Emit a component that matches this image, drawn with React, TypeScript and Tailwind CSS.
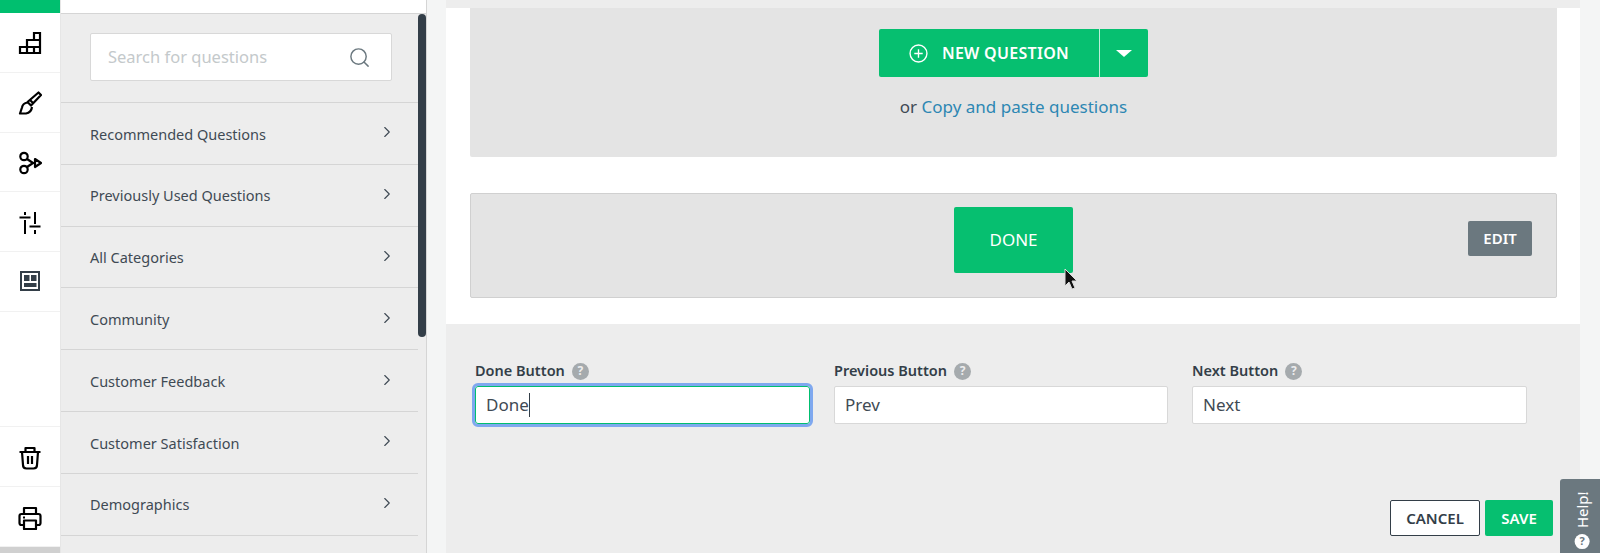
import { Search, ChevronRight } from 'lucide-react';

const font = "font-['Noto_Sans',sans-serif]";

const categories = [
  'Recommended Questions',
  'Previously Used Questions',
  'All Categories',
  'Community',
  'Customer Feedback',
  'Customer Satisfaction',
  'Demographics',
];

const IconStairs = () => (
  <svg width="24" height="24" viewBox="0 0 24 24" fill="none" stroke="#000" strokeWidth="2.200">
    <path d="M2 16h20v6H2zM9 16v6M16 16v6M9 16V9h13v7M16 9V2h6v7" />
  </svg>
);

const IconBrush = () => (
  <svg width="24" height="24" viewBox="0 0 24 24" fill="none" stroke="#000" strokeWidth="2.200" strokeLinejoin="round">
    <path d="M20.500 1.500 23 4 13 14.500 9.500 11zM9.500 11.500c-3 .5-5 2-5.500 5l-2 6h6c3-.5 5.500-2.500 6-6.500M12 9l3.500 3.500" />
  </svg>
);

const IconBranch = () => (
  <svg width="24" height="24" viewBox="0 0 24 24" fill="none" stroke="#000" strokeWidth="2.200" strokeLinejoin="round">
    <circle cx="6" cy="5.500" r="3.700" />
    <circle cx="6" cy="18.500" r="3.700" />
    <path d="M9 8l6 4-6 4M15 12h2M17 8l6 4-6 4z" />
  </svg>
);

const IconSliders = () => (
  <svg width="24" height="24" viewBox="0 0 24 24" fill="none" stroke="#000" strokeWidth="2">
    <path d="M7 1v3M1.500 6.500h11M7 9v14M17 1v12M11.500 15.500h11M17 19v4" />
  </svg>
);

const IconLayout = () => (
  <svg width="24" height="24" viewBox="0 0 24 24" fill="none">
    <rect x="3" y="3" width="18" height="18" stroke="#333e48" strokeWidth="2" />
    <rect x="6" y="6" width="5.500" height="6" fill="#333e48" />
    <rect x="13" y="6" width="5.500" height="6" fill="#333e48" />
    <rect x="6" y="14" width="12.500" height="4" fill="#333e48" />
  </svg>
);

const IconTrash = () => (
  <svg width="24" height="24" viewBox="0 0 24 24" fill="none" stroke="#000" strokeWidth="2.200" strokeLinejoin="round">
    <path d="M1.500 6h21M7.500 6V2h9v4M4 6l1 13c0 2 1.500 3.500 3.500 3.500h7c2 0 3.500-1.500 3.500-3.500l1-13M10 10v8M14 10v8" />
  </svg>
);

const IconPrint = () => (
  <svg width="24" height="24" viewBox="0 0 24 24" fill="none" stroke="#000" strokeWidth="2.200" strokeLinejoin="round">
    <path d="M6 8V2h12v6M6 19H3.500Q1.500 19 1.500 17V10Q1.500 8 3.500 8h17q2 0 2 2v7q0 2-2 2H18M6 14.500h12V23H6z" />
    <path d="M5 11.500h2" />
  </svg>
);

const HelpDot = () => (
  <span className="flex h-[17px] w-[17px] items-center justify-center rounded-full bg-[#a5aaad] text-[12px] font-bold leading-none text-[#ededed]">
    ?
  </span>
);

const RailItem = ({ children }: { children: React.ReactNode }) => (
  <div className="flex h-[59.800px] items-center justify-center border-b border-[#f1f1f1] pt-[2px]">{children}</div>
);

const Field = ({ label, value, focused }: { label: string; value: string; focused?: boolean }) => (
  <div className="flex flex-col">
    <div className="flex h-[24px] items-center gap-[7px]">
      <span className="text-[14.500px] font-semibold text-[#333e48]">{label}</span>
      <HelpDot />
    </div>
    {focused ? (
      <div className="mt-[3px] flex h-[38px] items-center rounded-[3px] border border-[#00bf6f] bg-white pl-[10px] text-[17px] text-[#3f4a54] outline-[3px] outline-[#7fa8ef]">
        {value}
        <span className="h-[24px] w-px bg-[#333e48]" />
      </div>
    ) : (
      <div className="mt-[3px] flex h-[38px] items-center rounded-[2px] border border-[#d8d8d8] bg-white pl-[10px] text-[17px] text-[#3f4a54]">
        {value}
      </div>
    )}
  </div>
);

export default function App() {
  return (
    <div className={`relative flex h-[553px] w-[1600px] overflow-hidden bg-[#f4f5f5] ${font}`}>
      {/* icon rail */}
      <div className="flex w-[61px] flex-col border-r border-[#e6e6e6] bg-white">
        <div className="h-[13px] bg-[#00bf6f]" />
        <RailItem><IconStairs /></RailItem>
        <RailItem><IconBrush /></RailItem>
        <RailItem><IconBranch /></RailItem>
        <RailItem><IconSliders /></RailItem>
        <RailItem><div className="-mt-[4px]"><IconLayout /></div></RailItem>
        <div className="flex-1 border-b border-[#f1f1f1]" />
        <RailItem><IconTrash /></RailItem>
        <RailItem><IconPrint /></RailItem>
        <div className="h-[6px] bg-[#d0d0d0]" />
      </div>

      {/* question bank */}
      <div className="flex h-full w-[366px] flex-col border-r border-[#d5d5d5] bg-white">
        <div className="h-[13px]" />
        <div className="flex flex-1 border-t border-[#d5d5d5] bg-[#ededed]">
          <div className="w-[357px]">
            <div className="h-[89px] border-b border-[#d5d5d5] pl-[29px] pt-[19px]">
              <div className="flex h-[48px] w-[302px] items-center justify-between rounded-[2px] border border-[#d8d8d8] bg-white pl-[17px] pr-[20px] text-[16.500px] text-[#c4c9cb]">
                Search for questions
                <Search size={23} strokeWidth={1.5} className="text-[#6b787f]" />
              </div>
            </div>
            {categories.map((name) => (
              <div key={name} className="flex h-[61.800px] items-center justify-between border-b border-[#d5d5d5] pl-[29px] pr-[22px] pt-[2px] text-[14.500px] text-[#3f4a54]">
                {name}
                <ChevronRight size={18} strokeWidth={1.5} className="-mt-[4px]" />
              </div>
            ))}
          </div>
          <div className="w-[8px]">
            <div className="h-[323px] rounded-[4px] bg-[#333e48]" />
          </div>
        </div>
      </div>

      {/* canvas */}
      <div className="flex w-[19px] shrink-0" />
      <div className="flex w-[1134px] flex-col">
        <div className="h-[8px] bg-[#ededed]" />
        <div className="h-[316px] bg-white pl-[24px] pr-[23px]">
          <div className="flex h-[149px] flex-col items-center rounded-b-[2px] bg-[#e4e4e4] pt-[21px]">
            <div className="flex h-[48px] w-[269px] rounded-[2px] bg-[#06bf70] text-white">
              <div className="flex w-[221px] items-center justify-center gap-[14px] border-r border-[#bdeed8] text-[16px] font-semibold tracking-[0.3px]">
                <svg width="19" height="19" viewBox="0 0 18 18" fill="none" stroke="#fff" strokeWidth="1.300">
                  <circle cx="9" cy="9" r="8" />
                  <path d="M9 5v8M5 9h8" />
                </svg>
                NEW QUESTION
              </div>
              <div className="flex flex-1 items-center justify-center">
                <div className="h-0 w-0 border-x-[8px] border-t-[7px] border-x-transparent border-t-white" />
              </div>
            </div>
            <div className="mt-[17px] text-[17px] text-[#3f4a54]">
              or <span className="text-[#2d87b3]">Copy and paste questions</span>
            </div>
          </div>
          <div className="mt-[36px] flex h-[105px] items-center justify-between rounded-[2px] border border-[#d0d0d0] bg-[#e4e4e4] pb-[12px] pl-[483px] pr-[24px]">
            <div className="flex h-[66px] w-[119px] items-center justify-center rounded-[2px] bg-[#06bf70] text-[17px] text-white">DONE</div>
            <div className="-mt-[3px] flex h-[35px] w-[64px] items-center justify-center rounded-[2px] bg-[#6b787f] text-[15px] font-semibold text-white">EDIT</div>
          </div>
        </div>
        <div className="flex-1 bg-[#ededed] pl-[29px] pr-[53px] pt-[35px]">
          <div className="grid grid-cols-[335px_334px_335px] gap-x-[24px]">
            <Field label="Done Button" value="Done" focused />
            <Field label="Previous Button" value="Prev" />
            <Field label="Next Button" value="Next" />
          </div>
          <div className="mt-[76px] mr-[-26px] flex justify-end gap-[5px]">
            <div className="flex h-[36px] w-[90px] items-center justify-center rounded-[2px] border border-[#333e48] bg-white text-[15px] font-semibold text-[#333e48]">CANCEL</div>
            <div className="flex h-[36px] w-[68px] items-center justify-center rounded-[2px] bg-[#06bf70] text-[15px] font-semibold text-white">SAVE</div>
          </div>
        </div>
      </div>

      {/* help tab */}
      <div className="absolute bottom-0 right-0 flex h-[74px] w-[40px] items-center justify-center rounded-tl-[3px] bg-[#6b787f]">
        <div className="flex translate-x-[2px] translate-y-[4px] -rotate-90 items-center gap-[6px] whitespace-nowrap text-[15px] text-white">
          <span className="flex h-[15px] w-[15px] rotate-90 items-center justify-center rounded-full bg-white text-[11px] font-bold text-[#6b787f]">?</span>
          Help!
        </div>
      </div>

      {/* mouse pointer */}
      <svg className="absolute left-[1063px] top-[268px]" width="16" height="24" viewBox="0 0 16 24">
        <path d="M2 1v17l4-4 3 7 3-1-3-7h5z" fill="#111" stroke="#ddd" strokeWidth="1" />
      </svg>
    </div>
  );
}
